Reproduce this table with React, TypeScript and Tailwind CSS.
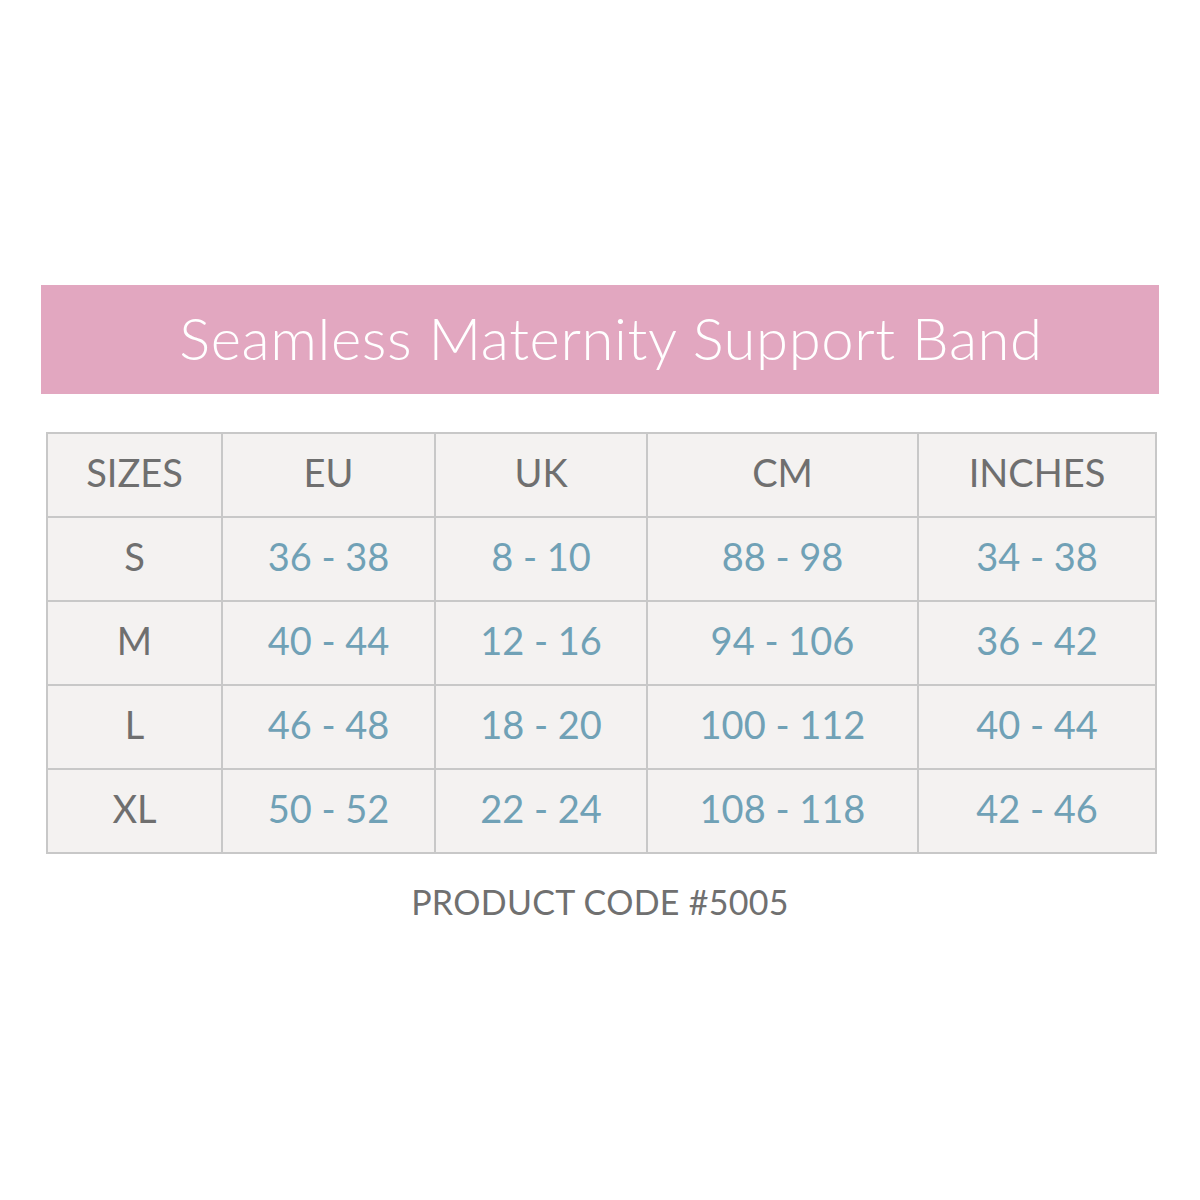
const rows = [
  ["S", "36 - 38", "8 - 10", "88 - 98", "34 - 38"],
  ["M", "40 - 44", "12 - 16", "94 - 106", "36 - 42"],
  ["L", "46 - 48", "18 - 20", "100 - 112", "40 - 44"],
  ["XL", "50 - 52", "22 - 24", "108 - 118", "42 - 46"],
];
const headers = ["SIZES", "EU", "UK", "CM", "INCHES"];
const cols = "grid-cols-[175px_213px_212px_271px_238px]";

export default function App() {
  return (
    <div className="w-[1200px] h-[1200px] bg-white flex flex-col items-center" style={{ fontFamily: "Lato, 'Open Sans', sans-serif" }}>
      <div className="mt-[285px] w-[1118px] h-[109px] bg-[#e2a7c0] flex items-center justify-center pl-[22px]">
        <span className="text-white text-[58px] font-light tracking-[0.6px] leading-none pb-[4px]">Seamless Maternity Support Band</span>
      </div>
      <div className={`mt-[38px] ml-[3px] w-[1111px] grid ${cols} border-t-2 border-l-2 border-[#c8c8c8] bg-[#f4f2f1]`}>
        {headers.map((h) => (
          <div key={h} className="h-[84px] pb-[6px] border-r-2 border-b-2 border-[#c8c8c8] flex items-center justify-center text-[#6f6f6f] text-[38px] leading-none">
            {h}
          </div>
        ))}
        {rows.map((r) =>
          r.map((c, i) => (
            <div key={r[0] + i} className={`h-[84px] pb-[6px] border-r-2 border-b-2 border-[#c8c8c8] flex items-center justify-center text-[38px] leading-none ${i === 0 ? "text-[#6f6f6f]" : "text-[#70a1b6]"}`}>
              {c}
            </div>
          ))
        )}
      </div>
      <div className="mt-[31px] text-[#707070] text-[34px] tracking-[0.3px] leading-none">PRODUCT CODE #5005</div>
    </div>
  );
}
